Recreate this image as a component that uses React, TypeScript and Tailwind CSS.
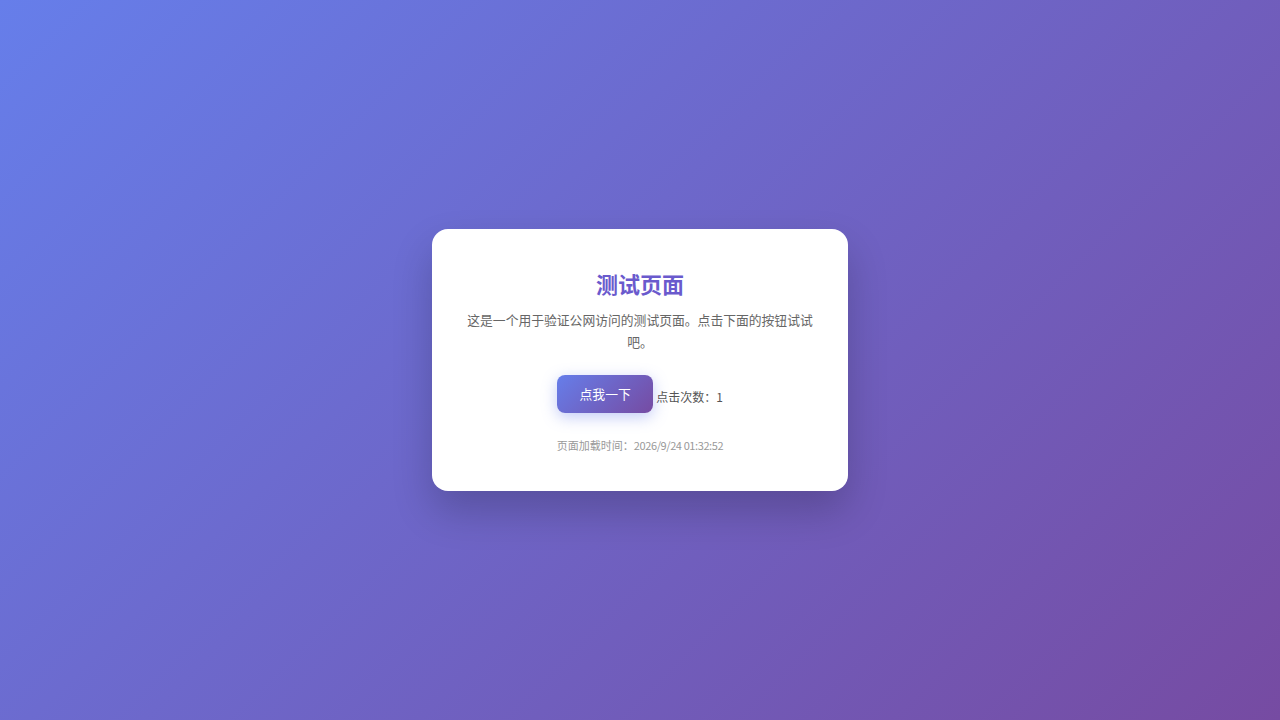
export default function App() {
  return (
    <div
      className="flex min-h-screen w-full items-center justify-center bg-[linear-gradient(135deg,#667eea_0%,#764ba2_100%)]"
      style={{ fontFamily: '"Noto Sans CJK SC", "Noto Sans", sans-serif' }}
    >
      <div className="w-[416px] rounded-2xl bg-white px-8 pt-[38px] pb-[37px] text-center shadow-[0_20px_40px_rgba(0,0,0,0.2)]">
        <h1 className="text-[22px] leading-[32px] font-bold text-[#6a5acd]">测试页面</h1>
        <p className="mt-[10px] text-[12.8px] leading-[22px] text-[#666]">
          这是一个用于验证公网访问的测试页面。点击下面的按钮试试吧。
        </p>
        <div className="mt-[22px] flex items-center justify-center gap-[3px]">
          <button className="h-[38px] w-[96px] rounded-lg bg-[linear-gradient(135deg,#667eea_0%,#764ba2_100%)] text-[12.8px] text-white shadow-[0_4px_15px_rgba(102,126,234,0.4)]">
            点我一下
          </button>
          <span className="mt-[6px] text-[12px] text-[#555]">点击次数：1</span>
        </div>
        <p className="mt-[23px] text-[11px] leading-[18px] text-[#999]">
          页面加载时间：<span className="tracking-[-0.4px]">2026/9/24 01:32:52</span>
        </p>
      </div>
    </div>
  );
}
